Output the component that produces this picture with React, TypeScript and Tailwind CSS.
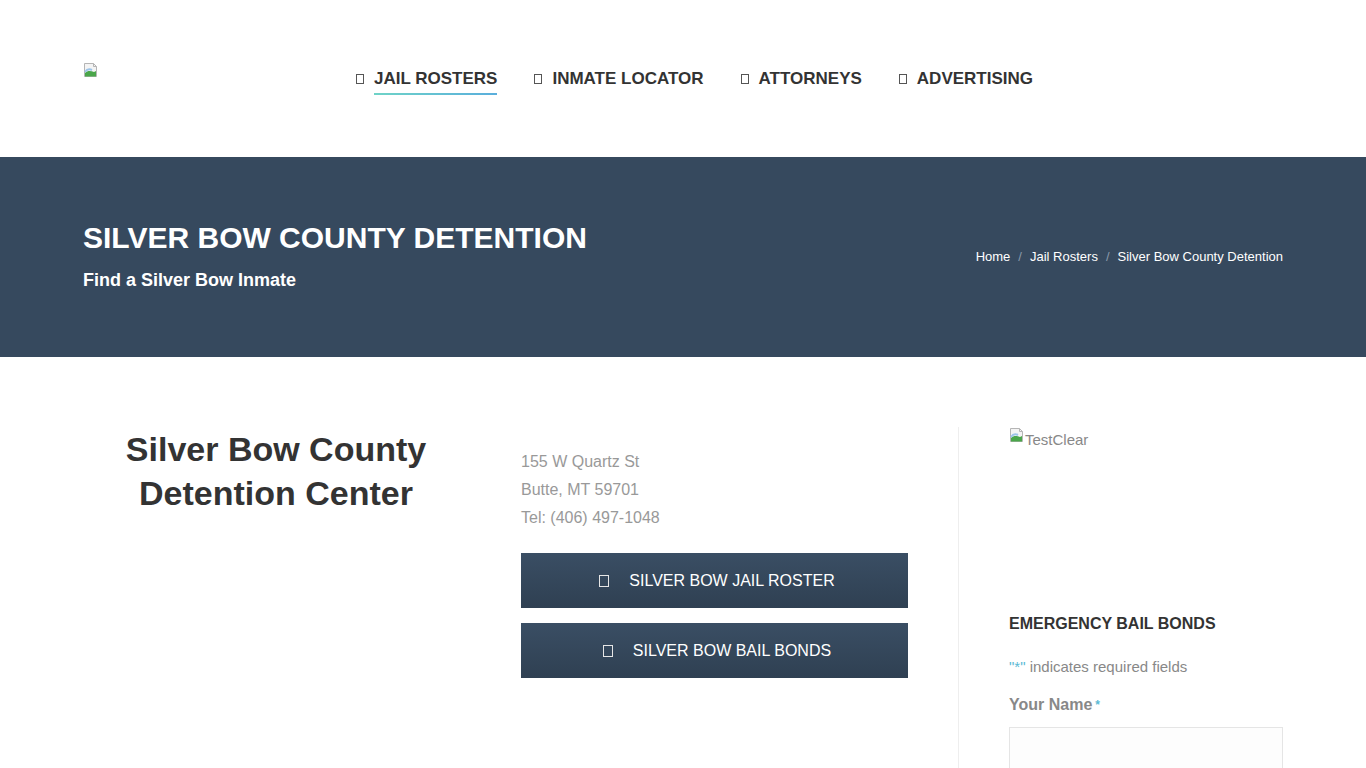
import React from "react";

const Box = ({ className = "" }: { className?: string }) => (
  <span className={`inline-block border border-current ${className}`} />
);

const BrokenImg = () => (
  <svg width="16" height="16" viewBox="0 0 16 16" className="block shrink-0">
    <path d="M1.5 1.5h9l3 3v10h-12z" fill="#f4f4f4" stroke="#b5b5b5" />
    <path d="M10.5 1.5v3h3" fill="none" stroke="#b5b5b5" />
    <path d="M2 14.5 L2 11 C5 8 8 9 11 10 L13 9 L13 14.5 Z" fill="#4aa64a" />
    <path d="M2 10 C4 7 7 7 9 8" fill="none" stroke="#9cc4e8" strokeWidth="2" />
  </svg>
);

export default function App() {
  const nav = [
    { t: "JAIL ROSTERS", active: true },
    { t: "INMATE LOCATOR" },
    { t: "ATTORNEYS" },
    { t: "ADVERTISING" },
  ];
  return (
    <div className="min-h-[768px] bg-white" style={{ fontFamily: '"Liberation Sans", Arial, sans-serif' }}>
      {/* Header */}
      <header className="h-[157px] flex items-start px-[83px]">
        <div className="pt-[62px] w-[273px]">
          <BrokenImg />
        </div>
        <nav className="flex gap-[37px] pt-[67px]">
          {nav.map((n) => (
            <div key={n.t} className="flex items-start gap-[10px] text-[#333]">
              <Box className="w-[8px] h-[10px] mt-[7px] text-[#555]" />
              <div className="flex flex-col">
                <span className="text-[17px] font-bold leading-[24px]">{n.t}</span>
                {n.active && (
                  <span className="mt-[2px] h-[2px] w-full bg-gradient-to-r from-[#6fd3c7] to-[#5aaedc]" />
                )}
              </div>
            </div>
          ))}
        </nav>
      </header>

      {/* Banner */}
      <section className="h-[200px] bg-[#36495e] px-[83px] flex items-center justify-between">
        <div className="pb-[2px]">
          <h1 className="text-white text-[30px] font-bold leading-[36px] tracking-[0px]">
            SILVER BOW COUNTY DETENTION
          </h1>
          <p className="text-white text-[18px] font-bold mt-[12px] leading-[24px]">Find a Silver Bow Inmate</p>
        </div>
        <div className="text-white text-[13px] flex items-center gap-[8px] pb-[1px]">
          <span>Home</span>
          <span className="text-[#8a99ab]">/</span>
          <span>Jail Rosters</span>
          <span className="text-[#8a99ab]">/</span>
          <span>Silver Bow County Detention</span>
        </div>
      </section>

      {/* Content */}
      <section className="flex px-[83px] pt-[70px]">
        <div className="w-[386px]">
          <h2 className="text-center text-[#333] text-[34px] font-bold leading-[44px]">
            Silver Bow County
            <br />
            Detention Center
          </h2>
        </div>
        <div className="ml-[52px] w-[387px] pt-[21px]">
          <div className="text-[16px] leading-[28px] text-[#999]">
            <p>155 W Quartz St</p>
            <p>Butte, MT 59701</p>
            <p>Tel: (406) 497-1048</p>
          </div>
          <div className="mt-[21px] flex flex-col gap-[15px]">
            <button className="h-[55px] w-full bg-gradient-to-b from-[#3a4e64] to-[#2f4052] text-white text-[16px] flex items-center justify-center gap-[20px] pl-[5px]">
              <Box className="w-[10px] h-[12px] text-[#e6e6e6]" />
              <span>SILVER BOW JAIL ROSTER</span>
            </button>
            <button className="h-[55px] w-full bg-gradient-to-b from-[#3a4e64] to-[#2f4052] text-white text-[16px] flex items-center justify-center gap-[20px] pl-[5px]">
              <Box className="w-[10px] h-[12px] text-[#e6e6e6]" />
              <span>SILVER BOW BAIL BONDS</span>
            </button>
          </div>
        </div>
        <div className="ml-[50px] w-px bg-[#eeeeee] h-[341px] mt-0" />
        <aside className="ml-[50px] w-[274px]">
          <div className="flex items-start text-[15px] text-[#888] leading-[18px]">
            <BrokenImg />
            <span className="mt-[4px]">TestClear</span>
          </div>
          <h3 className="mt-[165px] text-[16px] font-bold text-[#333] leading-[20px]">EMERGENCY BAIL BONDS</h3>
          <p className="mt-[24px] text-[15px] text-[#888] leading-[18px]">
            <span className="text-[#5bbad5]">"*"</span> indicates required fields
          </p>
          <p className="mt-[20px] text-[16px] font-bold text-[#888] leading-[18px]">
            Your Name<span className="text-[#5bbad5] text-[12px] ml-[3px] align-top">*</span>
          </p>
          <div className="mt-[13px] h-[50px] border border-[#e5e5e5] bg-[#fdfdfd]" />
        </aside>
      </section>
    </div>
  );
}
